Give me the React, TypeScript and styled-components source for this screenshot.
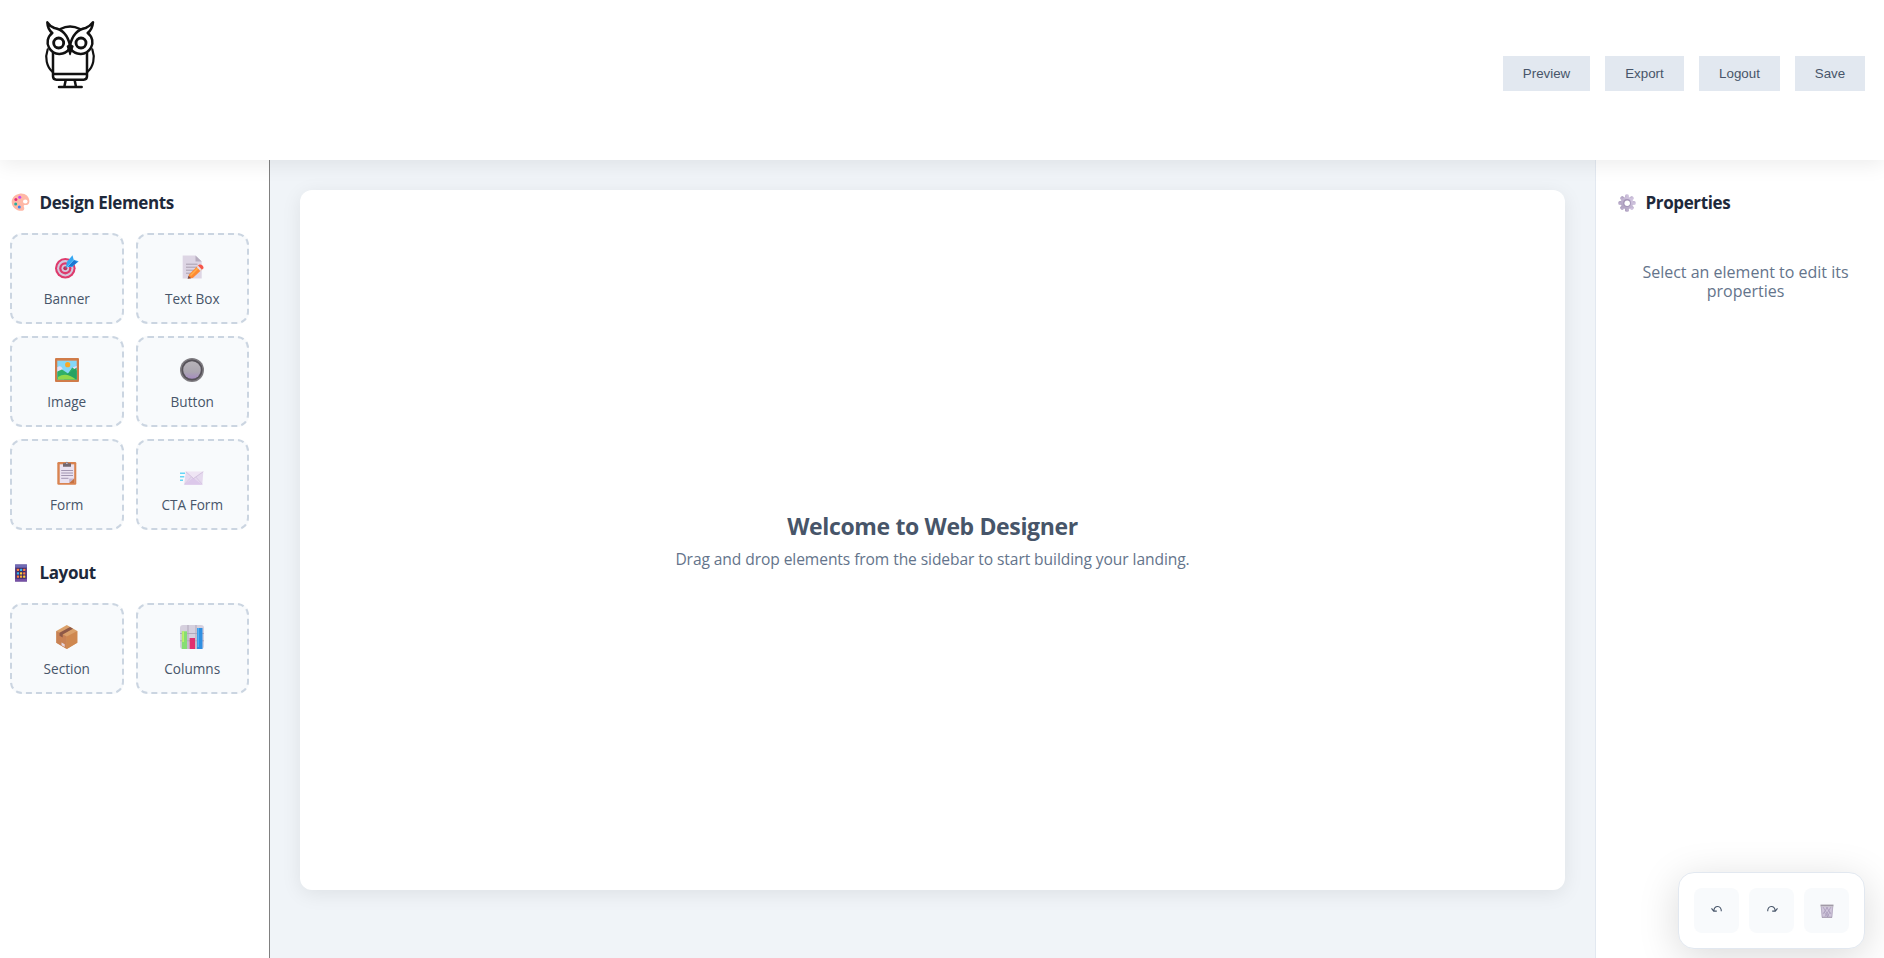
import React, { ReactNode } from 'react';
import styled, { createGlobalStyle } from 'styled-components';

const GlobalStyle = createGlobalStyle`
  * { box-sizing: border-box; }
  body {
    margin: 0;
    overflow: hidden;
    background: #fff;
    font-family: "Trebuchet MS", "Open Sans", "Noto Sans", sans-serif;
  }
`;

const Page = styled.div`
  display: flex;
  flex-direction: column;
  height: 100vh;
`;

const Header = styled.header`
  position: relative;
  z-index: 1;
  display: flex;
  justify-content: space-between;
  flex: none;
  height: 160px;
  padding: 15px 19px 0 40px;
  background: #fff;
  box-shadow: 0 4px 20px rgba(0, 0, 0, 0.08);
`;

const HeaderActions = styled.nav`
  display: flex;
  gap: 15px;
  height: 35px;
  margin-top: 41px;
`;

const HeaderButton = styled.button<{ $width: number }>`
  width: ${(p) => p.$width}px;
  padding: 0;
  border: 0;
  background: #e2e8f0;
  color: #475569;
  font: 13.333px/35px Arial, "Liberation Sans", sans-serif;
`;

const Workspace = styled.div`
  display: flex;
  flex: 1;
  min-height: 0;
`;

const Sidebar = styled.aside`
  display: flex;
  flex-direction: column;
  gap: 29px;
  flex: none;
  width: 270px;
  padding: 29px 20px 0 10px;
  border-right: 1px solid #808080;
  background: #fff;
`;

const Main = styled.main`
  flex: 1;
  padding: 30px 30px 0;
  background: #f0f4f8;
`;

const Canvas = styled.section`
  display: flex;
  flex-direction: column;
  align-items: center;
  justify-content: center;
  gap: 9px;
  height: 700px;
  border-radius: 12px;
  background: #fff;
  box-shadow: 0 4px 20px rgba(0, 0, 0, 0.08);
`;

const WelcomeTitle = styled.h2`
  margin: 0;
  color: #475569;
  font-size: 23px;
  font-weight: 700;
  line-height: 28px;
  letter-spacing: -0.36px;
`;

const WelcomeText = styled.p`
  margin: 0;
  color: #64748b;
  font-size: 15.6px;
  line-height: 20px;
  letter-spacing: -0.09px;
`;

const Panel = styled.aside`
  flex: none;
  width: 289px;
  padding: 29px 9px 0 20px;
  border-left: 1px solid #e2e8f0;
  background: #fff;
`;

const Heading = styled.h3`
  display: flex;
  align-items: center;
  gap: 8px;
  margin: 0;
  color: #1e293b;
  font-size: 17px;
  font-weight: 700;
  line-height: 27px;
  letter-spacing: -0.38px;
`;

const HeadingIcon = styled.span`
  display: flex;
  justify-content: center;
  width: 22px;
  margin-left: -0.5px;
`;

const Hint = styled.p`
  margin: 47px 0 0;
  padding: 0 20px;
  color: #64748b;
  font-size: 16px;
  line-height: 19px;
  text-align: center;
`;

const CardGrid = styled.div`
  display: grid;
  grid-template-columns: 1fr 1fr;
  gap: 12px;
  margin-top: 17px;
`;

const Card = styled.div`
  display: flex;
  flex-direction: column;
  align-items: center;
  gap: 11px;
  height: 91px;
  padding-top: 20px;
  border: 2px dashed #cbd5e1;
  border-radius: 12px;
  background: #f8fafc;
`;

const CardLabel = styled.span`
  color: #475569;
  font-size: 13.6px;
  line-height: 18px;
`;

const FloatingBar = styled.div`
  position: fixed;
  right: 19px;
  bottom: 9px;
  z-index: 2;
  display: flex;
  gap: 10px;
  padding: 15px;
  border: 1px solid #e2e8f0;
  border-radius: 16px;
  background: #fff;
  box-shadow: 0 8px 40px rgba(0, 0, 0, 0.15);
`;

const ToolButton = styled.button`
  display: flex;
  align-items: center;
  justify-content: center;
  width: 45px;
  height: 45px;
  padding: 0;
  border: 0;
  border-radius: 8px;
  background: #f8fafc;
`;

const Svg = ({ size = 24, box = '0 0 24 24', children }: { size?: number; box?: string; children: ReactNode }) => (
  <svg width={size} height={size} viewBox={box} fill="none">{children}</svg>
);

const Owl = () => (
  <svg width="60" height="80" viewBox="0 0 180 240" fill="none" stroke="#111" strokeWidth="7.5" strokeLinejoin="round" strokeLinecap="round">
    <path d="M61 42Q90 27 120 42" />
    <path d="M90 91C83 60 67 43 43 39Q29 33 22 22Q23 43 37 54C22 65 19 84 27 98C42 125 75 121 90 99" />
    <path d="M90 91C97 60 113 43 137 39Q151 33 159 22Q157 43 143 54C158 65 161 84 153 98C138 125 105 121 90 99" />
    <circle cx="56" cy="84" r="15" strokeWidth="8.500" />
    <circle cx="123" cy="84" r="15" strokeWidth="8.500" />
    <path d="M82 94L90 88L99 94L90 119Z" fill="#111" strokeWidth="4" />
    <path d="M39 113V184Q39 194 49 194H131Q141 194 141 184V113M39 177H141" />
    <path d="M23 103C14 128 20 155 37 170M157 103C166 128 160 155 143 170" strokeWidth="6.500" />
    <path d="M77 196L73 215M104 196L108 215M57 216H125" />
  </svg>
);

const Palette = () => (
  <Svg size={19} box="0 0 19 19">
    <path d="M8.5.7C13.8-.2 18.2 3.2 18.4 8c.1 2.8-1.8 4.2-4 4.1-1.2-.1-2.1.4-1.5 1.8.9 2 .1 3.6-1.5 3.8C5.6 18.3.9 14.3.7 9.2.6 5 4 1.4 8.500.7Z" fill="#FFB8A6" />
    <ellipse cx="14.3" cy="8.500" rx="2.300" ry="2" fill="#fff" />
    <circle cx="8.700" cy="4.200" r="1.500" fill="#C44BEF" />
    <circle cx="4.900" cy="6.600" r="1.500" fill="#E62C75" />
    <circle cx="4.700" cy="10.900" r="1.500" fill="#2AAFA0" />
    <circle cx="8.300" cy="13.900" r="1.500" fill="#3A86F0" />
  </Svg>
);

const Phone = () => (
  <Svg size={18} box="0 0 18 18">
    <rect x="3" y=".5" width="12" height="17" rx=".6" fill="#5B4187" />
    <rect x="3" y=".5" width="12" height="3" fill="#6F6BB5" />
    <rect x="3" y="15" width="12" height="2.500" fill="#7650A5" />
    <rect x="4.500" y="4" width="9" height="10.500" fill="#3D2B62" />
    {[4.8, 8.2, 11.600].map((y, r) =>
      [4.900, 8, 11.100].map((x, c) => (
        <rect key={`${r}${c}`} x={x} y={y} width="2.200" height="2.200" rx=".5" fill={[['#FF7C43', '#34B7F1', '#FF7C43'], ['#34B7F1', '#FFD13B', '#FF7C43'], ['#FF7C43', '#FFA83B', '#FFD13B']][r][c]} />
      )),
    )}
  </Svg>
);

const Gear = () => (
  <Svg size={18} box="0 0 18 18">
    <defs>
      <linearGradient id="gear" x1="1" y1="0" x2="0" y2="1">
        <stop stopColor="#D9CDE6" />
        <stop offset="1" stopColor="#AA9CBC" />
      </linearGradient>
    </defs>
    {[0, 45, 90, 135].map((a) => (
      <rect key={a} x="7" y=".3" width="4" height="17.400" rx="1.500" fill="url(#gear)" transform={`rotate(${a} 9 9)`} />
    ))}
    <circle cx="9" cy="9" r="6.200" fill="url(#gear)" />
    <circle cx="9" cy="9" r="3.900" fill="#A596B8" />
    <circle cx="9.200" cy="9.200" r="2.700" fill="#fff" />
  </Svg>
);

const Target = () => (
  <Svg>
    <circle cx="10.300" cy="13.300" r="10.300" fill="#DE3A6C" />
    <circle cx="10.300" cy="13.300" r="8.200" fill="#D5C7DC" />
    <circle cx="10.300" cy="13.300" r="6.100" fill="#DE3A6C" />
    <circle cx="10.300" cy="13.300" r="3.800" fill="#D5C7DC" />
    <circle cx="10.300" cy="13.300" r="2" fill="#B92C5A" />
    <path d="M10.500 13.300L15 8.500" stroke="#8B7196" strokeWidth="1.200" />
    <path d="M11 12L11.800 7L17.500.2L18.700 4.700L23.700 6.200L17.300 12Z" fill="#36A7F2" />
    <path d="M12.300 11.200L18.500 5L22.500 6.900L17.300 11.300Z" fill="#1C77D2" />
    <path d="M12 12L18.800 4.800" stroke="#6ACBFF" strokeWidth="1" />
  </Svg>
);

const Memo = () => (
  <Svg>
    <path d="M2.700.5H15.500L21.700 6.500V23.500H2.700Z" fill="#DDD5E4" />
    <path d="M15.500.5V6.500H21.700Z" fill="#B7ADBF" />
    <path d="M6 9.200H17.500M6 12.200H17.500M6 15.200H14M6 18.200H11" stroke="#A99EAF" />
    <path d="M9 19.500L18.500 10L22.500 14L12.800 23L8 23.500Z" fill="#FF8A33" />
    <path d="M10.500 20.500L19.500 11.500" stroke="#FFB04E" strokeWidth="1.500" />
    <path d="M16.700 12.100L18.200 10.600L21.800 14.600L20.300 16Z" fill="#E6DDEC" />
    <path d="M18.100 10.600L19.400 9.600Q21 9.100 22.500 10.600T23.400 13.500L21.900 14.600Z" fill="#F6554A" />
    <path d="M8.500 20.800L11.200 23.200L7.600 23.800Z" fill="#7B4E4B" />
  </Svg>
);

const Picture = () => (
  <Svg>
    <rect width="24" height="24" rx=".8" fill="#D98350" />
    <rect x="2.300" y="2.700" width="19.400" height="18.800" fill="#84D7F7" />
    <circle cx="12.700" cy="6.700" r="2.600" fill="#F9A825" />
    <path d="M2.300 9.300Q5.500 6.500 7.500 10.500V14H2.300ZM15 12Q18 8.500 21.700 8V13Z" fill="#E5DDF3" />
    <path d="M2.300 13.500L7 11.600L13 15.500L17.200 9.500L21.700 12.500V21.500H2.300Z" fill="#2FAF68" />
    <path d="M11 17L21.700 9.500V21.500H9Z" fill="#27A262" />
    <path d="M3 21.500V19Q11 13.500 21 21.500Z" fill="#8FD84A" />
    <path d="M1 1H23V23H1Z" stroke="#C77442" />
  </Svg>
);

const RoundButton = () => (
  <Svg>
    <defs>
      <linearGradient id="knob" x1="0" y1="0" x2="0" y2="1">
        <stop stopColor="#B7B3B9" />
        <stop offset=".6" stopColor="#ABA6B0" />
        <stop offset="1" stopColor="#A58CC0" />
      </linearGradient>
    </defs>
    <circle cx="12" cy="12" r="12" fill="#7E7B80" />
    <circle cx="12" cy="12" r="10.500" fill="#565259" />
    <circle cx="12" cy="12" r="8.800" fill="url(#knob)" />
  </Svg>
);

const Clipboard = () => (
  <Svg>
    <rect x="2.300" y="1" width="19" height="22.800" rx="1.200" fill="#D98350" />
    <path d="M4.700 3.300H19.200V22H4.700Z" fill="#EAE2F1" />
    <path d="M14.200 22V17.500H19.200Z" fill="#C2B5D0" />
    <path d="M14.200 22L19.200 17.500V22Z" fill="#C67242" />
    <path d="M6.200 9.500H18M6.200 12H18M6.200 14.500H18M6.200 17.300H13.500" stroke="#9184A2" strokeWidth=".8" />
    <path d="M8 5.700V2.300H10.300Q11.800-.7 13.500 2.300H16V5.700Z" fill="#74676F" />
    <circle cx="11.900" cy="2.300" r=".7" fill="#EAE2F1" />
  </Svg>
);

const Envelope = () => (
  <Svg>
    <path d="M0 12.300H5M0 15.800H4.300M0 19.300H3" stroke="#66D5F5" strokeWidth="1.500" />
    <path d="M5.800 10.700H23.300L22.300 23.700H4.200Z" fill="#E5D9EE" />
    <path d="M4.200 23.700L13 16.700L22.300 23.700Z" fill="#DCC8EA" />
    <path d="M5.800 10.700L13.500 17.500L23.300 10.700" fill="#EFE5F4" stroke="#C9B5D6" strokeWidth=".7" />
    <path d="M4.500 23.300L11.300 16M22.300 23.300L15.800 16" stroke="#CEBBDC" strokeWidth=".6" />
  </Svg>
);

const Parcel = () => (
  <Svg>
    <path d="M1.300 6L11.800 0L22.300 6V17.800L11.800 24L1.300 17.800Z" fill="#DBA16B" />
    <path d="M1.300 6L11.800 11.500V24L1.300 17.800Z" fill="#C98255" />
    <path d="M11.800 11.500L22.300 6V17.800L11.800 24Z" fill="#CF8850" />
    <path d="M4.500 7.700L15 2L18 3.700L7.700 9.500V12.500L4.500 10.700Z" fill="#8E5947" />
    <path d="M6.500 17.500L9.700 19.300V22L6.500 20.200Z" fill="#E4D6DF" />
  </Svg>
);

const Bars = () => (
  <Svg>
    <rect width="24" height="24" rx="3" fill="#D6D0DE" />
    <path d="M0 8.500H24M0 15.800H24M8 0V24M16 0V24" stroke="#B1A8BB" />
    <path d="M1.800 6.300H7V24H1.800Z" fill="#86DE73" />
    <path d="M2.300 6.300H4V17H2.300Z" fill="#C2EF69" />
    <path d="M9.600 13H15V24H9.600Z" fill="#E1306F" />
    <path d="M17 3H22.500V24H17Z" fill="#308FE2" />
    <path d="M17.500 3H19V22H17.500Z" fill="#51B2F4" />
  </Svg>
);

const Undo = () => (
  <Svg size={12} box="0 0 12 12">
    <path d="M10.300 6.300C10.600 0 3.300-.1 2.800 6M.5 3.300L2.700 6.100H5.800" stroke="#475569" strokeWidth="1.100" />
  </Svg>
);

const Redo = () => (
  <Svg size={12} box="0 0 12 12">
    <path d="M1.700 6.300C1.400 0 8.700-.1 9.200 6M11.500 3.300L9.300 6.100H6.200" stroke="#475569" strokeWidth="1.100" />
  </Svg>
);

const Trash = () => (
  <Svg size={14} box="0 0 14 14">
    <path d="M1 2.500H13L12 13.500H2Z" fill="#CFC5DA" />
    <path d="M3 3L9 12.500M6.500 3L11 10M11 3L5 12.500M7.500 3L3 10M4 8L8 13M10 8L7 13" stroke="#A598B7" strokeWidth=".7" />
    <path d="M1.200 2.500L2.200 13.500M12.800 2.500L11.800 13.500" stroke="#AFA5BC" strokeWidth=".8" />
    <path d="M.5 1.500H13.500" stroke="#A19AA6" strokeWidth="1.800" />
    <path d="M2 13.300H12" stroke="#A196AC" strokeWidth="1" />
  </Svg>
);

const designElements: [string, () => React.JSX.Element][] = [
  ['Banner', Target],
  ['Text Box', Memo],
  ['Image', Picture],
  ['Button', RoundButton],
  ['Form', Clipboard],
  ['CTA Form', Envelope],
];

const layoutElements: [string, () => React.JSX.Element][] = [
  ['Section', Parcel],
  ['Columns', Bars],
];

const Group = ({ title, icon, items }: { title: string; icon: ReactNode; items: typeof designElements }) => (
  <section>
    <Heading><HeadingIcon>{icon}</HeadingIcon>{title}</Heading>
    <CardGrid>
      {items.map(([label, Icon]) => (
        <Card key={label}>
          <Icon />
          <CardLabel>{label}</CardLabel>
        </Card>
      ))}
    </CardGrid>
  </section>
);

export default function App() {
  return (
    <Page>
      <GlobalStyle />
      <Header>
        <Owl />
        <HeaderActions>
          <HeaderButton $width={87}>Preview</HeaderButton>
          <HeaderButton $width={79}>Export</HeaderButton>
          <HeaderButton $width={81}>Logout</HeaderButton>
          <HeaderButton $width={70}>Save</HeaderButton>
        </HeaderActions>
      </Header>
      <Workspace>
        <Sidebar>
          <Group title="Design Elements" icon={<Palette />} items={designElements} />
          <Group title="Layout" icon={<Phone />} items={layoutElements} />
        </Sidebar>
        <Main>
          <Canvas>
            <WelcomeTitle>Welcome to Web Designer</WelcomeTitle>
            <WelcomeText>Drag and drop elements from the sidebar to start building your landing.</WelcomeText>
          </Canvas>
        </Main>
        <Panel>
          <Heading><HeadingIcon><Gear /></HeadingIcon>Properties</Heading>
          <Hint>Select an element to edit its properties</Hint>
        </Panel>
      </Workspace>
      <FloatingBar>
        <ToolButton aria-label="Undo"><Undo /></ToolButton>
        <ToolButton aria-label="Redo"><Redo /></ToolButton>
        <ToolButton aria-label="Delete"><Trash /></ToolButton>
      </FloatingBar>
    </Page>
  );
}
